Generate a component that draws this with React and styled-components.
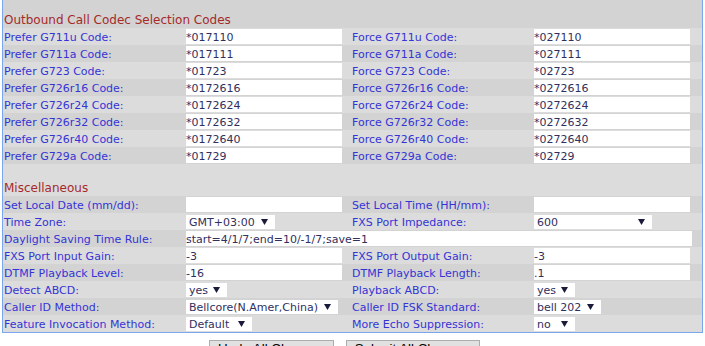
import React from 'react'
import styled, {createGlobalStyle} from 'styled-components'

const GlobalStyle = createGlobalStyle`
  body {
    margin: 0;
    background: #ffffff;
    font-family: 'DejaVu Sans', Verdana, sans-serif;
  }
`

const Panel = styled.div`
  width: 701px;
  margin-left: 2px;
  box-sizing: border-box;
  border: 1px solid #79a6ec;
  border-top: none;
  background: #d3d3d3;
`

const SectionTitle = styled.div`
  height: ${p => p.$height}px;
  box-sizing: border-box;
  display: flex;
  align-items: flex-end;
  padding: 0 0 1px 1px;
  font-size: 12px;
  color: #a62a2a;
  background: ${p => (p.$light ? '#dcdcdc' : '#d3d3d3')};
`

const Row = styled.div`
  display: grid;
  grid-template-columns: 183px 156px 192px 156px 1fr;
  height: 17px;
  background: ${p => (p.$light ? '#dcdcdc' : '#d3d3d3')};
`

const Label = styled.div`
  padding-left: ${p => (p.$second ? 10 : 1)}px;
  padding-top: 2px;
  line-height: 15px;
  font-size: 11px;
  color: #3434d6;
  white-space: nowrap;
  overflow: hidden;
`

const Field = styled.input`
  grid-column: ${p => (p.$wide ? 'span 3' : 'auto')};
  width: ${p => (p.$wide ? '506px' : '100%')};
  height: 15px;
  margin: 1px 0 0;
  padding: 1px 0 0 0;
  box-sizing: border-box;
  border: none;
  outline: none;
  background: #ffffff;
  font-family: 'DejaVu Sans', Verdana, sans-serif;
  font-size: 11px;
  color: #30305e;
`

const SelectBox = styled.div`
  width: ${p => p.$width}px;
  height: 14px;
  margin-top: 2px;
  box-sizing: border-box;
  display: flex;
  align-items: center;
  justify-content: space-between;
  padding: 1px 7px 0 3px;
  background: #ffffff;
  font-size: 11px;
  color: #30305e;
  white-space: nowrap;
`

const Arrow = styled.svg`
  width: 7px;
  height: 6px;
  margin-top: -2px;
  flex: none;
`

const Buttons = styled.div`
  display: flex;
  gap: 12px;
  padding: 7px 0 0 209px;
`

const Button = styled.button`
  height: 22px;
  padding: 0 8px;
  border: 1px solid #adadad;
  border-radius: 0;
  background: #e1e1e1;
  font-family: 'Liberation Sans', Arial, sans-serif;
  font-size: 13.33px;
  line-height: 15px;
  color: #000000;
  align-self: flex-start;
  display: flex;
  align-items: flex-start;
`

const Select = ({width, value}) => (
  <SelectBox $width={width}>
    <span>{value}</span>
    <Arrow viewBox='0 0 7 6'>
      <path d='M0 0 H7 L3.5 6 Z' fill='#1a1a3a' />
    </Arrow>
  </SelectBox>
)

const codecs = [
  ['G711u', '*017110', '*027110'],
  ['G711a', '*017111', '*027111'],
  ['G723', '*01723', '*02723'],
  ['G726r16', '*0172616', '*0272616'],
  ['G726r24', '*0172624', '*0272624'],
  ['G726r32', '*0172632', '*0272632'],
  ['G726r40', '*0172640', '*0272640'],
  ['G729a', '*01729', '*02729'],
]

export default function App() {
  return (
    <>
      <GlobalStyle />
      <Panel>
        <SectionTitle $height={28}>Outbound Call Codec Selection Codes</SectionTitle>
        {codecs.map(([name, prefer, force], i) => (
          <Row key={name} $light={i % 2 === 0}>
            <Label>Prefer {name} Code:</Label>
            <Field defaultValue={prefer} />
            <Label $second>Force {name} Code:</Label>
            <Field defaultValue={force} />
          </Row>
        ))}

        <SectionTitle $height={32} $light>Miscellaneous</SectionTitle>
        <Row>
          <Label>Set Local Date (mm/dd):</Label>
          <Field defaultValue='' />
          <Label $second>Set Local Time (HH/mm):</Label>
          <Field defaultValue='' />
        </Row>
        <Row $light>
          <Label>Time Zone:</Label>
          <div><Select width={89} value='GMT+03:00' /></div>
          <Label $second>FXS Port Impedance:</Label>
          <div><Select width={118} value='600' /></div>
        </Row>
        <Row>
          <Label>Daylight Saving Time Rule:</Label>
          <Field $wide defaultValue='start=4/1/7;end=10/-1/7;save=1' />
        </Row>
        <Row $light>
          <Label>FXS Port Input Gain:</Label>
          <Field defaultValue='-3' />
          <Label $second>FXS Port Output Gain:</Label>
          <Field defaultValue='-3' />
        </Row>
        <Row>
          <Label>DTMF Playback Level:</Label>
          <Field defaultValue='-16' />
          <Label $second>DTMF Playback Length:</Label>
          <Field defaultValue='.1' />
        </Row>
        <Row $light>
          <Label>Detect ABCD:</Label>
          <div><Select width={41} value='yes' /></div>
          <Label $second>Playback ABCD:</Label>
          <div><Select width={41} value='yes' /></div>
        </Row>
        <Row>
          <Label>Caller ID Method:</Label>
          <div><Select width={152} value='Bellcore(N.Amer,China)' /></div>
          <Label $second>Caller ID FSK Standard:</Label>
          <div><Select width={67} value='bell 202' /></div>
        </Row>
        <Row $light>
          <Label>Feature Invocation Method:</Label>
          <div><Select width={66} value='Default' /></div>
          <Label $second>More Echo Suppression:</Label>
          <div><Select width={41} value='no' /></div>
        </Row>
      </Panel>
      <Buttons>
        <Button>Undo All Changes</Button>
        <Button>Submit All Changes</Button>
      </Buttons>
    </>
  )
}
